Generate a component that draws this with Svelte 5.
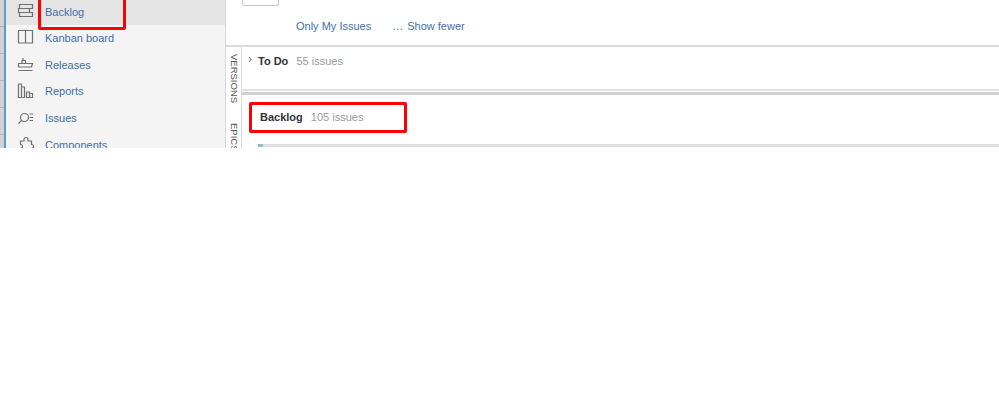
<script>
    const items = [
        { name: "Backlog", icon: "backlog", active: true },
        { name: "Kanban board", icon: "board" },
        { name: "Releases", icon: "ship" },
        { name: "Reports", icon: "chart" },
        { name: "Issues", icon: "search" },
        { name: "Components", icon: "puzzle" }
    ];
</script>

<div class="shot">
    <div class="strip"></div>
    <nav class="sidebar">
        {#each items as item}
            <div class="item" class:active={item.active}>
                <svg width="18" height="18" viewBox="0 0 18 18" fill="none" stroke="#707070" stroke-width="1.2">
                    {#if item.icon === "backlog"}
                        <path d="M2.500 1.500h13v4h-13zM1.500 5.500h11v4h-11zM2.500 9.500h13v4h-13z" />
                    {:else if item.icon === "board"}
                        <path d="M1.500 1.500h14v12.500h-14zM8.500 1.500v12.500" />
                    {:else if item.icon === "ship"}
                        <path d="M5 7.500V4.500h3.500v3M6 4.500V2M1.500 7.500h14l-1 3.500H1.500zM1.500 14.500h14" />
                    {:else if item.icon === "chart"}
                        <path d="M1.500 2h3v13.500h-3zM4.500 5h3v10.500h-3zM9.500 10h3v5.500h-3zM12.500 11.500h3v4h-3z" />
                    {:else if item.icon === "search"}
                        <circle cx="7.500" cy="8.500" r="4" />
                        <path d="M4.500 11.500L1.500 14.500M12.500 5h3.500M12.500 8.500h3.500M12.500 11.500h3.500" />
                    {:else}
                        <path d="M7 3.500a2 2 0 0 1 4 0V5h3.500v3.500a2 2 0 0 1 0 4V16H11a2 2 0 0 0-4 0H3.500v-3.500a2 2 0 0 0 0-4V5H7z" />
                    {/if}
                </svg>
                <span>{item.name}</span>
            </div>
        {/each}
    </nav>
    <main class="main">
        <div class="toolbar">
            <div class="select"></div>
            <div class="filters">
                <span>Only My Issues</span>
                <span class="fewer"><span>…</span><span>Show fewer</span></span>
            </div>
        </div>
        <div class="content">
            <div class="tabs">
                <span>VERSIONS</span>
                <span>EPICS</span>
            </div>
            <div class="lists">
                <div class="todo">
                    <i class="chev">›</i>
                    <b>To Do</b>
                    <em>55 issues</em>
                </div>
                <div class="backlog">
                    <b>Backlog</b>
                    <em>105 issues</em>
                </div>
                <div class="dropline"><div class="tick"></div></div>
            </div>
        </div>
        <div class="mark mark-right"></div>
    </main>
    <div class="mark mark-left"></div>
</div>

<style>
    :global(body) {
        background: #fff;
    }
    .shot {
        position: relative;
        display: flex;
        width: 999px;
        height: 148px;
        overflow: hidden;
        font-family: "Liberation Sans", Arial, sans-serif;
        font-size: 11px;
        background: #fff;
    }
    .strip {
        width: 4px;
        background: repeating-linear-gradient(#d2d2d2 0 26px, #b4b4b4 26px 27px);
        border-right: 2px solid #5b9bd0;
    }
    .sidebar {
        width: 219px;
        background: #f4f4f4;
        border-right: 1px solid #d8d8d8;
    }
    .item {
        display: flex;
        align-items: center;
        gap: 10px;
        height: 26.6px;
        padding-left: 11px;
        color: #3f6fa8;
    }
    .item svg {
        flex: none;
    }
    .item.active {
        height: 24px;
        padding-bottom: 1px;
        background: #e5e5e5;
    }
    .main {
        position: relative;
        flex: 1;
        min-width: 0;
    }
    .toolbar {
        height: 45px;
        border-bottom: 2px solid #dcdcdc;
    }
    .select {
        width: 35px;
        height: 5px;
        margin-left: 16px;
        border: 1px solid #c8c8c8;
        border-top: 0;
        border-radius: 0 0 3px 3px;
    }
    .filters {
        display: flex;
        gap: 21px;
        margin: 14px 0 0 70px;
        color: #3f6fa8;
    }
    .fewer {
        display: flex;
        gap: 4px;
    }
    .content {
        display: flex;
    }
    .tabs {
        width: 16px;
        flex: none;
        border-right: 1px solid #dcdcdc;
        height: 101px;
        writing-mode: vertical-rl;
        font-size: 9.500px;
        color: #555;
        padding-top: 7px;
        box-sizing: border-box;
        display: flex;
        gap: 20px;
        line-height: 13px;
    }
    .lists {
        flex: 1;
        min-width: 0;
    }
    .todo {
        position: relative;
        height: 44px;
        margin-bottom: 1px;
        padding: 8px 0 0 16px;
        box-sizing: border-box;
        border-bottom: 2px solid #e2e2e2;
    }
    .chev {
        position: absolute;
        left: 6px;
        top: 5px;
        font-style: normal;
        color: #777;
        font-size: 12px;
    }
    .backlog {
        height: 52px;
        padding: 16px 0 0 18px;
        box-sizing: border-box;
        border-top: 3px solid #d0d0d0;
    }
    b {
        font-weight: 700;
        color: #333;
        margin-right: 5px;
    }
    em {
        font-style: normal;
        color: #999;
    }
    .dropline {
        height: 3px;
        margin-left: 16px;
        background: #e0e0e0;
    }
    .tick {
        width: 5px;
        height: 3px;
        background: #8fc0c5;
    }
    .mark {
        position: absolute;
        border: 3px solid #f00;
        border-radius: 2px;
        box-sizing: border-box;
    }
    .mark-left {
        left: 38px;
        top: -4px;
        width: 88px;
        height: 34px;
    }
    .mark-right {
        left: 23px;
        top: 102px;
        width: 158px;
        height: 31px;
    }
</style>
